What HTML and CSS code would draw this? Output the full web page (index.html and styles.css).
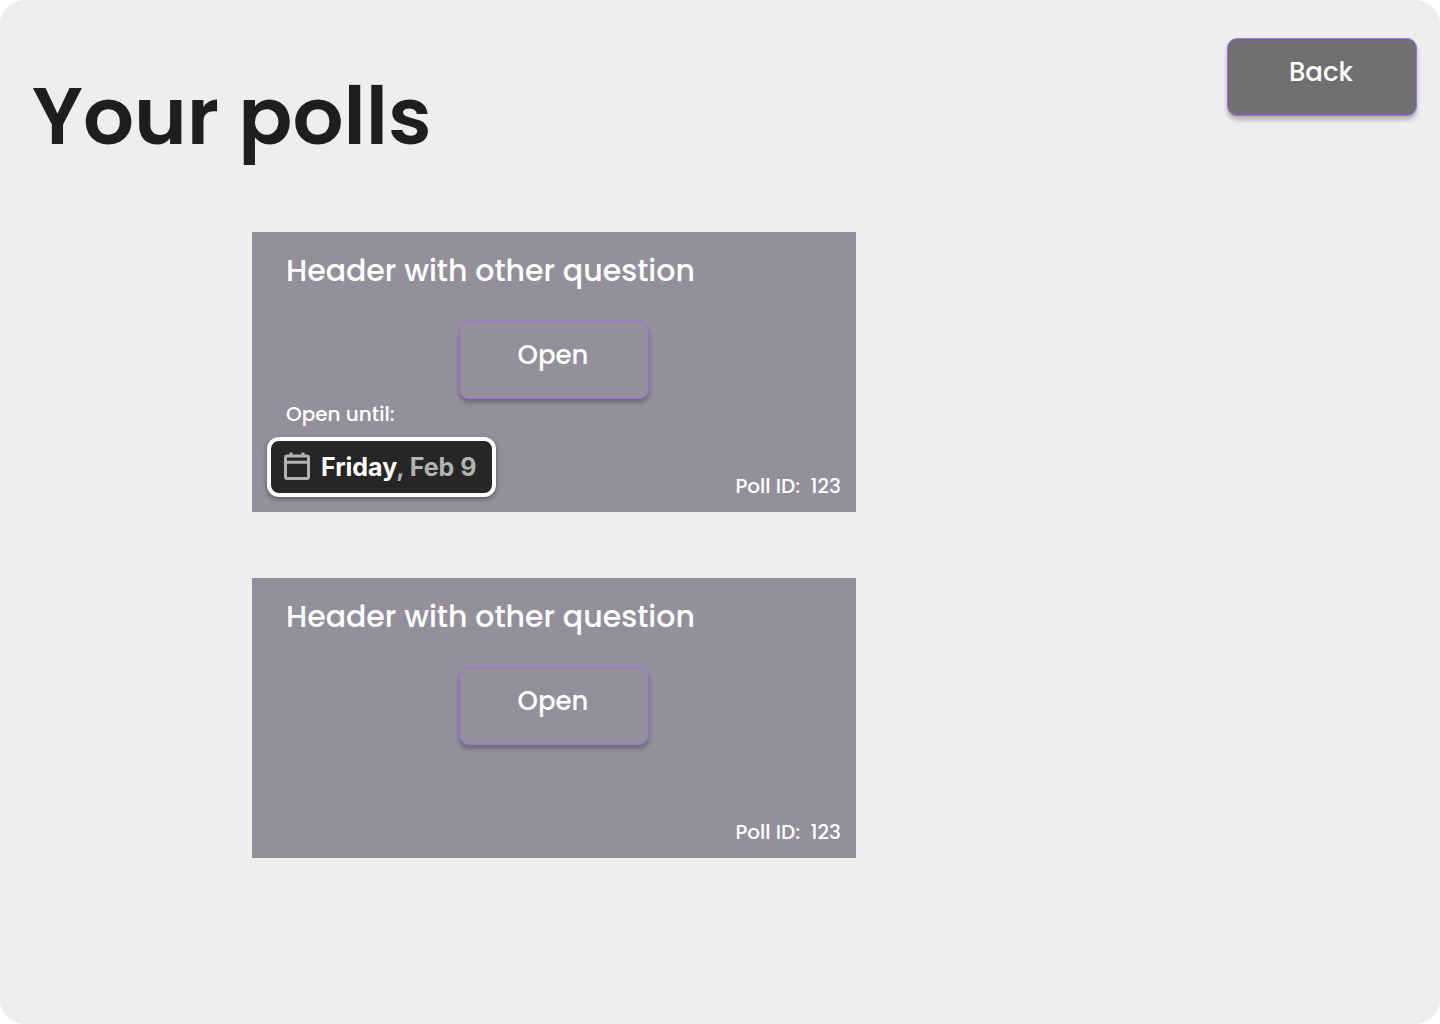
FILE: index.html
```html
<!DOCTYPE html>
<html lang="en">
<head>
<meta charset="utf-8">
<meta name="viewport" content="width=device-width, initial-scale=1">
<title>Your polls</title>
<link rel="stylesheet" href="styles.css">
</head>
<body>
<div class="page">
  <header class="page-header">
    <h1 class="page-title">Your polls</h1>
    <button class="btn btn-back" type="button">Back</button>
  </header>
  <main class="polls">
    <article class="poll">
      <h2 class="poll-title">Header with other question</h2>
      <button class="btn" type="button">Open</button>
      <div class="poll-footer">
        <div class="deadline">
          <span class="deadline-label" id="until">Open until:</span>
          <button class="date" type="button" aria-describedby="until">
            <svg class="date-icon" viewBox="0 0 26 30" aria-hidden="true">
              <rect x="1.5" y="4" width="23" height="22.5" rx="1.5"/>
              <path d="M1.5 10.2h23M7 .5v4M19 .5v4"/>
            </svg>
            <time datetime="02-09"><span class="date-day">Friday</span>, Feb 9</time>
          </button>
        </div>
        <p class="poll-id">Poll ID:&nbsp; 123</p>
      </div>
    </article>
    <article class="poll">
      <h2 class="poll-title">Header with other question</h2>
      <button class="btn" type="button">Open</button>
      <div class="poll-footer">
        <p class="poll-id">Poll ID:&nbsp; 123</p>
      </div>
    </article>
  </main>
</div>
</body>
</html>
```
FILE: styles.css
```css
* {
  box-sizing: border-box;
}

body {
  margin: 0;
  background: #fff;
  font-family: Poppins, Inter, sans-serif;
  font-weight: 500;
  color: #1e1e1e;
}

h1, h2, p {
  margin: 0;
}

button {
  font-family: inherit;
  cursor: pointer;
}

.page {
  min-height: 100vh;
  background: #eee;
  border-radius: 24px;
}

.page-header {
  display: flex;
  justify-content: space-between;
  align-items: flex-start;
  padding: 38px 23px 0 32px;
}

.page-title {
  padding-top: 18px;
  font-size: 80px;
  font-weight: 600;
  line-height: 120px;
}

.btn {
  width: 190px;
  height: 78px;
  padding: 0 2px 10px 0;
  border: 1px solid #9f6cf0;
  border-radius: 10px;
  background: #93909b;
  box-shadow: 0 4px 4px rgba(0, 0, 0, 0.25);
  color: #fff;
  font-size: 26px;
  font-weight: 500;
  line-height: 40px;
}

.btn-back {
  background: #707072;
}

.polls {
  display: flex;
  flex-direction: column;
  gap: 66px;
  padding: 56px 32px 56px 17.5%;
}

.poll {
  display: flex;
  flex-direction: column;
  align-items: center;
  max-width: 604px;
  min-height: 280px;
  padding: 19px 15px 15px;
  background: #93909b;
  color: #fff;
}

.poll-title {
  align-self: stretch;
  margin-bottom: 30px;
  padding-left: 19px;
  font-size: 30px;
  font-weight: 500;
  line-height: 40px;
}

.poll-footer {
  display: flex;
  flex: 1;
  align-self: stretch;
  align-items: flex-end;
}

.deadline {
  display: flex;
  flex-direction: column;
  gap: 8px;
}

.deadline-label {
  padding-left: 19px;
  font-size: 20px;
  line-height: 30px;
}

.date {
  display: flex;
  align-items: center;
  gap: 11px;
  height: 60px;
  padding: 0 15px 0 13px;
  border: 4px solid #fff;
  border-radius: 12px;
  background: #262626;
  box-shadow: 0 2px 5px rgba(0, 0, 0, 0.4);
  color: #b3b3b3;
  font-family: Inter, sans-serif;
  font-size: 25px;
  font-weight: 700;
  white-space: nowrap;
}

.date-day {
  color: #fff;
}

.date-icon {
  width: 26px;
  height: 30px;
  fill: none;
  stroke: #b3b3b3;
  stroke-width: 3;
}

.poll-id {
  margin-left: auto;
  font-size: 20px;
  line-height: 22px;
}
```
